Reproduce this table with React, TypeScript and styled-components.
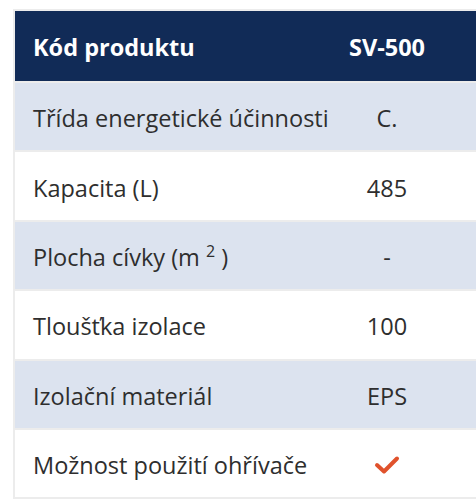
import React from 'react';
import styled, { createGlobalStyle } from 'styled-components';

const GlobalStyle = createGlobalStyle`
	html, body {
		margin: 0;
		padding: 0;
		background: #fff;
		overflow: hidden;
	}
	body {
		font-family: "Open Sans", "Liberation Sans", sans-serif;
	}
`;

const rows: { label: React.ReactNode; value: React.ReactNode }[] = [
	{ label: 'Třída energetické účinnosti', value: 'C.' },
	{ label: 'Kapacita (L)', value: '485' },
	{ label: <>Plocha cívky (m <sup>2</sup> )</>, value: '-' },
	{ label: 'Tloušťka izolace', value: '100' },
	{ label: 'Izolační materiál', value: 'EPS' },
	{ label: 'Možnost použití ohřívače', value: <Check /> },
];

function Check() {
	return (
		<svg width="28" height="22" viewBox="0 0 28 22">
			<path
				d="M4 11 L11 17.5 L24 4.5"
				fill="none"
				stroke="#e0522c"
				strokeWidth="4"
				strokeLinecap="round"
				strokeLinejoin="round"
			/>
		</svg>
	);
}

const App = () => {
	return (
		<>
			<GlobalStyle />
			<Page>
				<Table>
					<Row $head>
						<Label>Kód produktu</Label>
						<Value>SV-500</Value>
					</Row>
					{rows.map((r, i) => (
						<Row key={i} $shade={i % 2 === 0}>
							<Label>{r.label}</Label>
							<Value>{r.value}</Value>
						</Row>
					))}
				</Table>
			</Page>
		</>
	);
};

const Page = styled.div`
	padding: 9px 0 0 13px;
`;

const Table = styled.div`
	border-top: 2px solid #ececec;
	border-left: 2px solid #ececec;
	border-bottom: 2px solid #ececec;
	display: flex;
	flex-direction: column;
	gap: 2px;
	background: #ececec;
`;

const Row = styled.div<{ $head?: boolean; $shade?: boolean }>`
	display: grid;
	grid-template-columns: 324px 96px;
	align-items: center;
	height: ${(p) => (p.$head ? '70px' : '67.4px')};
	background: ${(p) => (p.$head ? '#112b57' : p.$shade ? '#dce3ef' : '#ffffff')};
	color: ${(p) => (p.$head ? '#ffffff' : '#2e2e2e')};
	font-weight: ${(p) => (p.$head ? 700 : 400)};
	font-size: 23.5px;
	line-height: 30px;
	padding-top: ${(p) => (p.$head ? '1px' : '3px')};
	box-sizing: border-box;

	sup {
		font-size: 16px;
		line-height: 0;
		vertical-align: 9px;
	}
`;

const Label = styled.div`
	padding-left: 18px;
	white-space: nowrap;
`;

const Value = styled.div`
	display: flex;
	justify-content: center;
	align-items: center;
	white-space: nowrap;
`;

export default App;
